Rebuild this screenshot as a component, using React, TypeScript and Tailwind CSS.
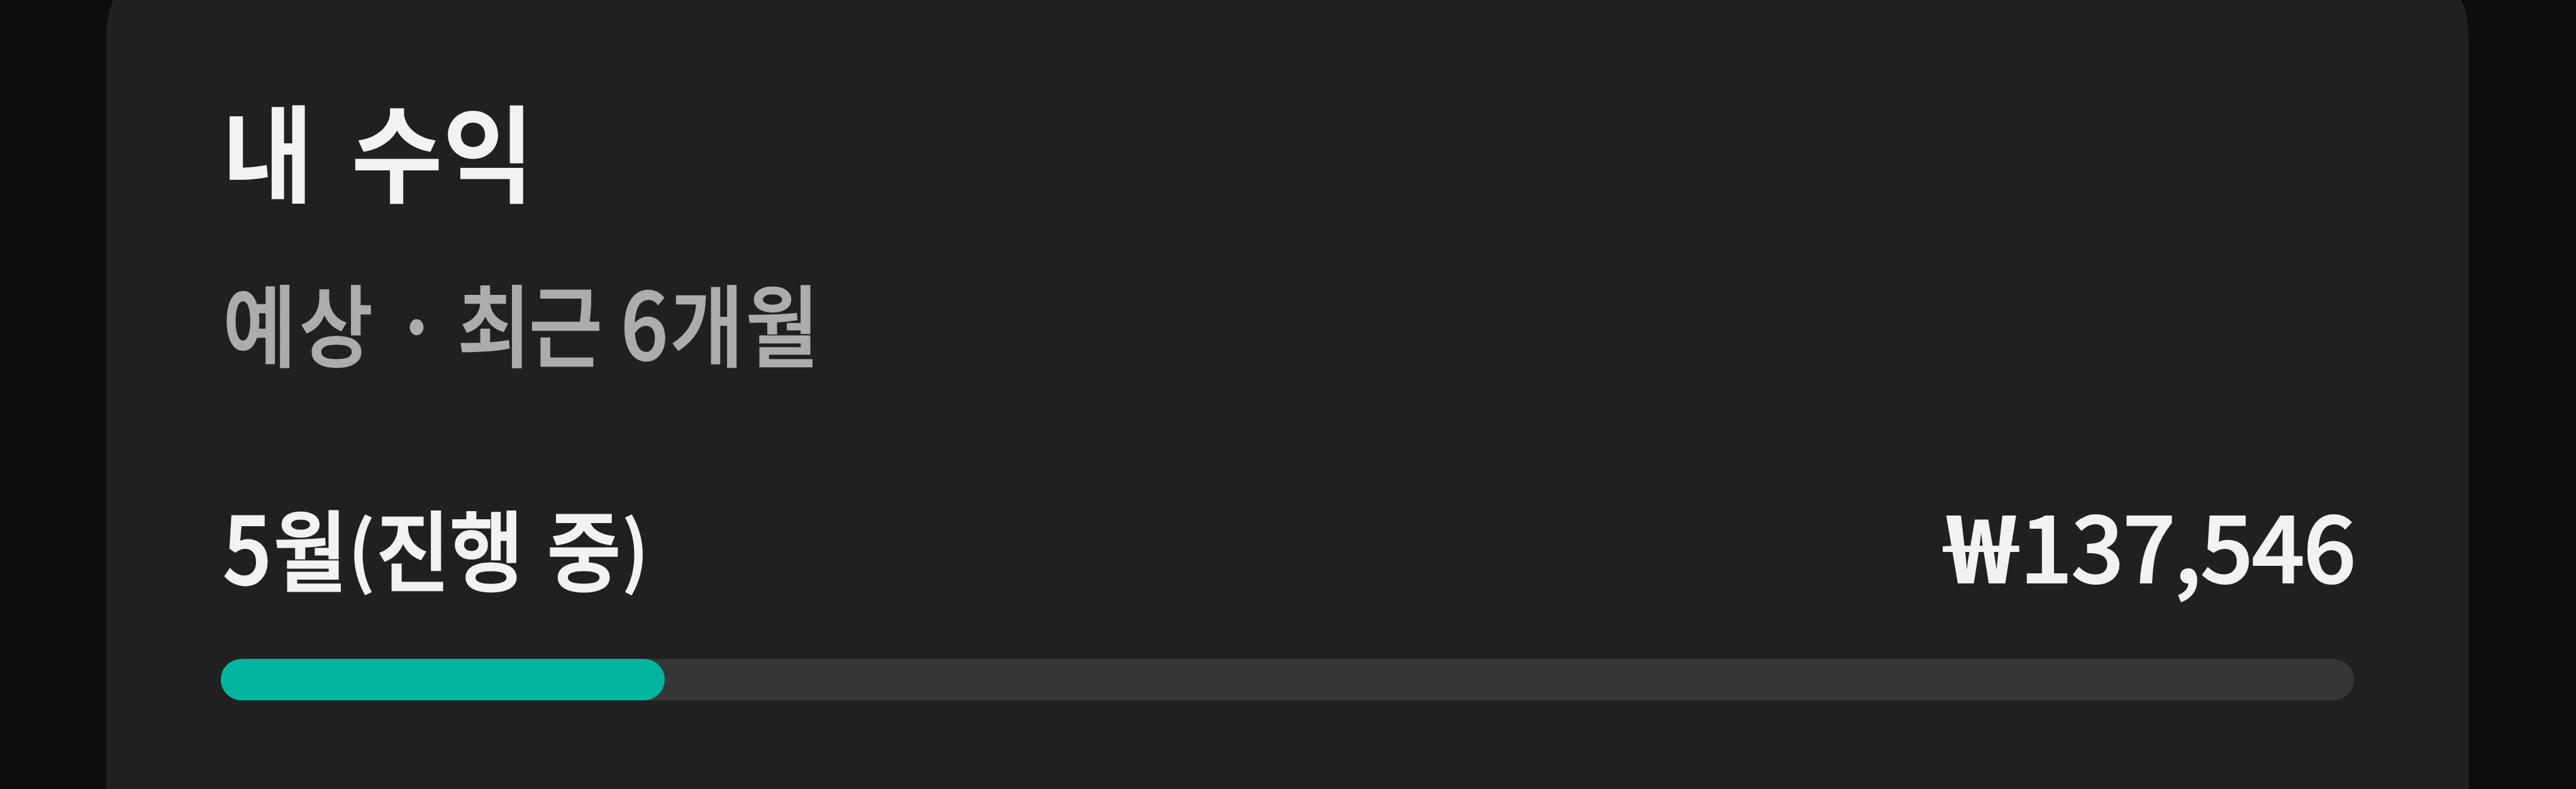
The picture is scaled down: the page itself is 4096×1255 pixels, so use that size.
const FONT = "font-['Noto_Sans_CJK_KR',sans-serif]";

export default function App() {
  return (
    <main className={`${FONT} h-[1255px] w-[4096px] overflow-hidden bg-[#0d0d0d] pl-[169px]`}>
      <section className="-mt-[78px] h-[1500px] w-[3756px] rounded-[131px] bg-[#202020] pr-[181px] pl-[182px] pt-[235px]">
        <h1 className="h-[160px] origin-left scale-x-[0.94] whitespace-nowrap pl-[2px] text-[168px] leading-[158px] font-bold text-[#f2f2f2] [word-spacing:26px]">
          내 수익
        </h1>
        <p className="mt-[120px] h-[140px] origin-left scale-x-[0.897] whitespace-nowrap pl-[4px] text-[141px] leading-[142px] font-medium text-[#acacac] [-webkit-text-stroke:2.5px_#acacac]">
          <span className="tracking-[6px]">예상</span> · <span className="tracking-[-3px]">최근</span>{" "}
          <span className="mr-[4px] ml-[4px] text-[147px]">6</span>
          <span className="tracking-[4px]">개월</span>
        </p>
        <div className="mt-[218px] flex h-[140px] justify-between leading-[140px] font-medium whitespace-nowrap text-[#f2f2f2]">
          <span className="origin-left scale-x-[0.915] pl-[4px] text-[139px] [-webkit-text-stroke:3px_#f2f2f2]">
            <span className="text-[147px]">5</span>
            <span className="ml-[4px]">월</span>
            <span className="relative -top-[8px] ml-[3px] mr-[4px] text-[122px]">(</span>진행
            <span className="[word-spacing:10px]"> 중</span>
            <span className="relative -top-[8px] ml-[4px] text-[122px]">)</span>
          </span>
          <span className="text-[148px] leading-[136px] tracking-[-2.5px] [-webkit-text-stroke:2px_#f2f2f2]">
            <span className="mr-[8px] inline-block origin-right scale-x-[1.33]">₩</span>137,546
          </span>
        </div>
        <div className="mt-[113px] h-[66px] w-[3392px] rounded-full bg-[#363636]">
          <div className="h-full w-[706px] rounded-full bg-[#00b4a0]" />
        </div>
      </section>
    </main>
  );
}
